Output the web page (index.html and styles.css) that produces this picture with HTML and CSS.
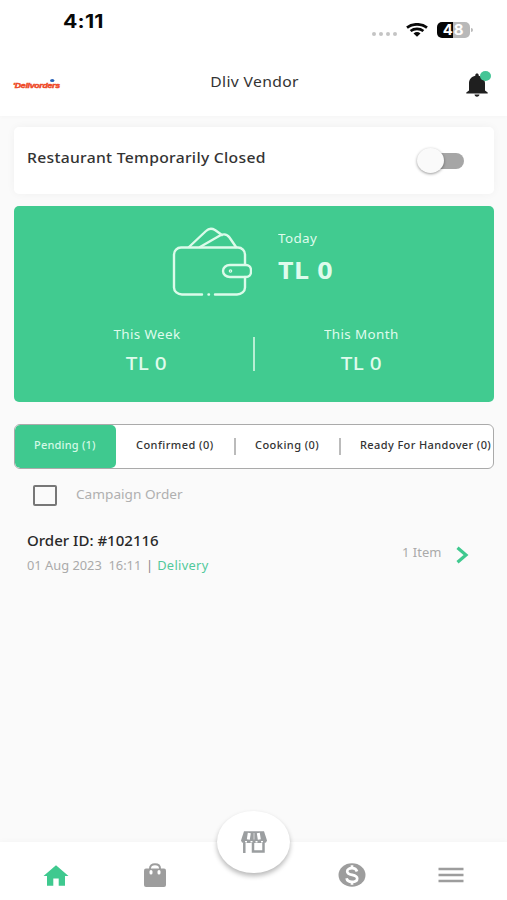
FILE: index.html
```html
<!DOCTYPE html>
<html lang="en">
<head>
<meta charset="utf-8">
<title>Dliv Vendor</title>
<link rel="stylesheet" href="styles.css">
</head>
<body>
<div class="app">
  <header class="top">
    <div class="status">
      <span class="time">4:11</span>
      <div class="indicators">
        <span class="signal"><i></i><i></i><i></i><i></i></span>
        <svg class="wifi" width="22" height="14" viewBox="0 0 22 14" fill="none" stroke="#080808" stroke-width="2.7"><path d="M1 4.600C6.500.2 15.500.2 21 4.600M4.600 8C8.300 5.100 13.700 5.100 17.400 8"/><path d="M7.500 10.400Q11 7.800 14.500 10.400L11 13.800Z" fill="#080808" stroke="none"/></svg>
        <span class="battery">48</span><span class="cap"></span>
      </div>
    </div>
    <div class="bar">
      <span class="logo">'Delivorders<i></i></span>
      <h1>Dliv Vendor</h1>
      <span class="bell">
        <svg width="22" height="24" viewBox="0 0 22 24" fill="#1f1f1f"><path d="M11 .5c1 0 1.700.7 1.700 1.700v.6c4 .8 6.300 3.700 6.300 7.700v7l2.700 2V20.500H.3V19.500l2.700-2v-7c0-4 2.300-6.900 6.300-7.700v-.6C9.300 1.200 10 .5 11 .5ZM8.500 21.500h5c0 1.200-1.100 2.200-2.500 2.200S8.500 22.700 8.500 21.500Z"/></svg>
        <i></i>
      </span>
    </div>
  </header>

  <main>
    <section class="closed">
      <span class="closed-label">Restaurant Temporarily Closed</span>
      <span class="switch"><i></i></span>
    </section>

    <section class="earnings">
      <div class="today">
        <svg width="80" height="70" viewBox="0 0 80 70" fill="none" stroke="#dcfbea" stroke-width="2.400" stroke-linecap="round" stroke-linejoin="round"><path d="M30 67.500H10a8 7 0 0 1-8-7V27.500a7 7 0 0 1 7-7H66a7 7 0 0 1 7 7V37M73 50v10.500a8 7 0 0 1-8 7H43M36.500 67.500h.5"/><path d="M17 20 34 4q4-4 9-1l7 5M28 20 48 8.500q6-3 9.500 2L64 20"/><path d="M58 38H74a5 5 0 0 1 5 5v2a5 5 0 0 1-5 5H58c-4 0-7-2.700-7-6s3-6 7-6Z"/><circle cx="58.500" cy="44" r=".6"/></svg>
        <div class="today-text"><span class="small">Today</span><strong>TL 0</strong></div>
      </div>
      <div class="periods">
        <div class="period"><span class="small">This Week</span><b>TL 0</b></div>
        <i class="rule"></i>
        <div class="period"><span class="small">This Month</span><b>TL 0</b></div>
      </div>
    </section>

    <nav class="tabs">
      <span class="tab active">Pending (1)</span>
      <span class="tab confirmed">Confirmed (0)</span><i></i>
      <span class="tab cooking">Cooking (0)</span><i></i>
      <span class="tab ready">Ready For Handover (0)</span>
    </nav>

    <label class="campaign"><span class="box"></span><span class="campaign-label">Campaign Order</span></label>

    <article class="order">
      <div>
        <h2>Order ID: #102116</h2>
        <p><span class="date">01 Aug 2023&nbsp; 16:11</span><span class="bar-mark">|</span><span class="delivery">Delivery</span></p>
      </div>
      <div class="items"><span>1 Item</span>
        <svg width="13" height="18" viewBox="0 0 13 18" fill="none" stroke="#3fc98f" stroke-width="3.200"><path d="M1.500 1.700 10 9 1.500 16.300"/></svg>
      </div>
    </article>
  </main>

  <footer class="nav">
    <span class="item"><svg width="26" height="21" viewBox="0 0 26 21" fill="#3fc98f"><path d="M13 .3 25.500 11H22v9.700H15.700V13.500H10.300v7.200H4V11H.5Z"/></svg></span>
    <span class="item"><svg width="24" height="25" viewBox="0 0 24 25"><path d="M7 7V5.500C7 2.700 9 1.200 12 1.200s5 1.500 5 4.300V7" fill="none" stroke="#9d9d9d" stroke-width="2"/><rect x="1" y="5.500" width="22" height="18.500" rx="2" fill="#9d9d9d"/><path d="M8 8.500v1.500M16 8.500v1.500" stroke="#fff" stroke-width="3" stroke-linecap="round"/></svg></span>
    <span class="item"></span>
    <span class="item"><svg width="28" height="24" viewBox="0 0 28 24"><ellipse cx="14" cy="12" rx="13.500" ry="11.800" fill="#9d9d9d"/><path d="M19 8.500C18.300 6.200 16.500 5.200 14 5.200c-2.800 0-4.800 1.200-4.800 3.200 0 4.600 10 2.400 10 7 0 2-2.100 3.400-5.200 3.400-3 0-5-1.200-5.400-3.600M14 2.300v3M14 18.700v3" fill="none" stroke="#fff" stroke-width="2.700"/></svg></span>
    <span class="item"><svg width="26" height="16" viewBox="0 0 26 16" stroke="#9d9d9d" stroke-width="2.300"><path d="M.5 2h25M.5 8h25M.5 14h25"/></svg></span>
    <span class="store"><svg width="26" height="22" viewBox="0 0 26 22"><path d="M3 .3H23L26 9.500Q25.500 12 23 12H3Q.5 12 0 9.500Z" fill="#9b9ea0"/><path d="M8.300 2 7.300 8.500M17.300 2 18.300 8.500" stroke="#fff" stroke-width="3"/><path d="M13 2v6.500" stroke="#d5d6d7" stroke-width="1"/><path d="M4 10.800h2M9.500 10.800h2M14.500 10.800h2M20 10.800h2" stroke="#fff" stroke-width="1.500"/><path d="M3.300 11.500V22M12 11.500V20.500H22.500V11.500" fill="none" stroke="#9b9ea0" stroke-width="2.500"/></svg></span>
  </footer>
</div>
</body>
</html>
```
FILE: styles.css
```css
* { box-sizing: border-box; }
body { margin: 0; background: #fafafa; font-family: "Noto Sans", sans-serif; color: #333; }
.app { width: 507px; height: 900px; display: flex; flex-direction: column; overflow: hidden; white-space: nowrap; }
span, i, svg { flex-shrink: 0; }
i { display: block; }
.top { height: 116px; background: #fff; box-shadow: 0 0 5px rgba(0,0,0,.035); }
.status { height: 50px; display: flex; justify-content: space-between; padding: 9px 35px 0 63px; }
.time { font: 700 18.5px/24px Inter, sans-serif; color: #080808; letter-spacing: .2px; transform: scaleX(1.15); transform-origin: left; }
.indicators { display: flex; height: 22px; margin-top: 9px; }
.signal { display: flex; gap: 3px; margin: 14px 9px 0 0; }
.signal i { width: 4px; height: 4px; border-radius: 50%; background: #c4c4c4; }
.wifi { margin: 5px 9px 0 0; }
.battery { width: 33px; height: 16px; margin-top: 4px; border-radius: 5px; background: linear-gradient(90deg, #050505 48%, #b9b9b9 48%); color: #fff; font: 700 15px/16px Inter, sans-serif; text-align: center; letter-spacing: .8px; }
.cap { width: 2px; height: 4px; margin: 10px -1px 0 1px; border-radius: 0 2px 2px 0; background: #bbb; }
.bar { height: 66px; display: flex; justify-content: space-between; padding: 0 13px 0 13px; }
.logo { position: relative; width: 70px; margin-top: 29px; font: italic 700 8px/14px "Liberation Sans", sans-serif; color: #ee4928; letter-spacing: -.25px; -webkit-text-stroke: .5px #ee4928; transform: scaleX(1.09); transform-origin: left; }
.logo i { position: absolute; left: 34px; top: 0; width: 4px; height: 3px; border-radius: 50%; background: #2862b8; }
h1 { margin: 21px 0 0 2px; font-size: 14px; line-height: 22px; font-weight: 400; letter-spacing: .3px; transform: scaleX(1.12); }
.bell { position: relative; width: 70px; padding: 23px 0 0 42px; }
.bell i { position: absolute; left: 56px; top: 21px; width: 11px; height: 10px; border-radius: 50%; background: #45c596; }
main { flex: 1; padding: 11px 13px 0 14px; }
.closed { height: 67px; border-radius: 5px; background: #fff; box-shadow: 0 0 8px rgba(0,0,0,.045); display: flex; justify-content: space-between; padding: 0 30px 0 13px; }
.closed-label { margin-top: 20px; font-size: 14px; line-height: 22px; font-weight: 500; letter-spacing: .26px; transform: scaleX(1.12); transform-origin: left; }
.switch { position: relative; width: 44px; height: 16px; margin-top: 26px; border-radius: 8px; background: #a6a6a6; }
.switch i { position: absolute; left: -3px; top: -5px; width: 27px; height: 25px; border-radius: 50%; background: #fafafa; box-shadow: 0 1px 3px rgba(0,0,0,.4); }
.earnings { height: 196px; margin-top: 12px; border-radius: 5px; background: #41cb90; color: #dffbec; }
.today { display: flex; height: 116px; padding: 21px 0 0 158px; }
.today-text { display: flex; flex-direction: column; margin: 3px 0 0 26px; transform: scaleX(1.12); transform-origin: left; }
.small { font-size: 12px; line-height: 18px; letter-spacing: .33px; }
.today strong { margin-top: 8px; font-size: 24px; line-height: 28px; font-weight: 700; letter-spacing: .5px; }
.periods { display: flex; }
.period { flex: 1; display: flex; flex-direction: column; align-items: center; padding-top: 4px; }
.period > * { transform: scaleX(1.12); }
.period:first-child { padding-left: 26px; }
.period:last-child { padding-right: 26px; }
.period b { margin-top: 6px; font-size: 18.5px; line-height: 26px; font-weight: 500; letter-spacing: .25px; }
.rule { width: 2px; height: 34px; margin-top: 15px; background: #b7efd4; }
.tabs { height: 45px; margin-top: 22px; border: 1px solid #aaa; border-radius: 6px; background: #fff; overflow: hidden; display: flex; }
.tab { padding-top: 11px; font-size: 11px; line-height: 18px; font-weight: 500; letter-spacing: .45px; }
.active { width: 101px; background: #3fc98f; border-radius: 5px; color: #d4f9e6; padding-left: 19px; letter-spacing: .2px; }
.confirmed { width: 118px; padding-left: 20px; }
.tabs i { width: 2px; height: 17px; margin-top: 13px; background: #bbb; }
.cooking { width: 103px; padding-left: 19px; }
.ready { padding-left: 19px; letter-spacing: .39px; }
.campaign { display: flex; height: 54px; padding: 16px 0 0 19px; color: #b0b0b0; }
.box { width: 24px; height: 21px; border: 2px solid #777; border-radius: 2px; }
.campaign-label { margin: -1px 0 0 19px; font-size: 12.4px; line-height: 22px; transform: scaleX(1.1); transform-origin: left; }
.order { display: flex; justify-content: space-between; padding: 6px 25px 0 13px; }
h2 { margin: 0; font-size: 13.8px; line-height: 24px; font-weight: 500; color: #292929; transform: scaleX(1.09); transform-origin: left; }
p { margin: 3px 0 0; display: flex; font-size: 12px; line-height: 20px; color: #aaa; transform: scaleX(1.07); transform-origin: left; }
h2, p { width: 200px; }
.bar-mark { margin: 0 3.7px 0 4.5px; color: #888; }
.delivery { color: #51c99b; letter-spacing: .3px; }
.items { display: flex; color: #aaa; font-size: 12px; line-height: 20px; padding-top: 14px; }
.items span { transform: scaleX(1.08); transform-origin: right; }
.items svg { margin: 3px 0 0 15px; }
.nav { position: relative; height: 58px; background: #fff; box-shadow: 0 0 7px rgba(0,0,0,.03); display: flex; padding: 8px 7px 0; }
.item { flex: 1; height: 50px; display: flex; align-items: center; justify-content: center; }
.store { position: absolute; left: 217px; top: -31px; width: 73px; height: 62px; border-radius: 50%; background: #fff; box-shadow: 0 3px 5px rgba(0,0,0,.28); display: flex; align-items: center; justify-content: center; }
```
